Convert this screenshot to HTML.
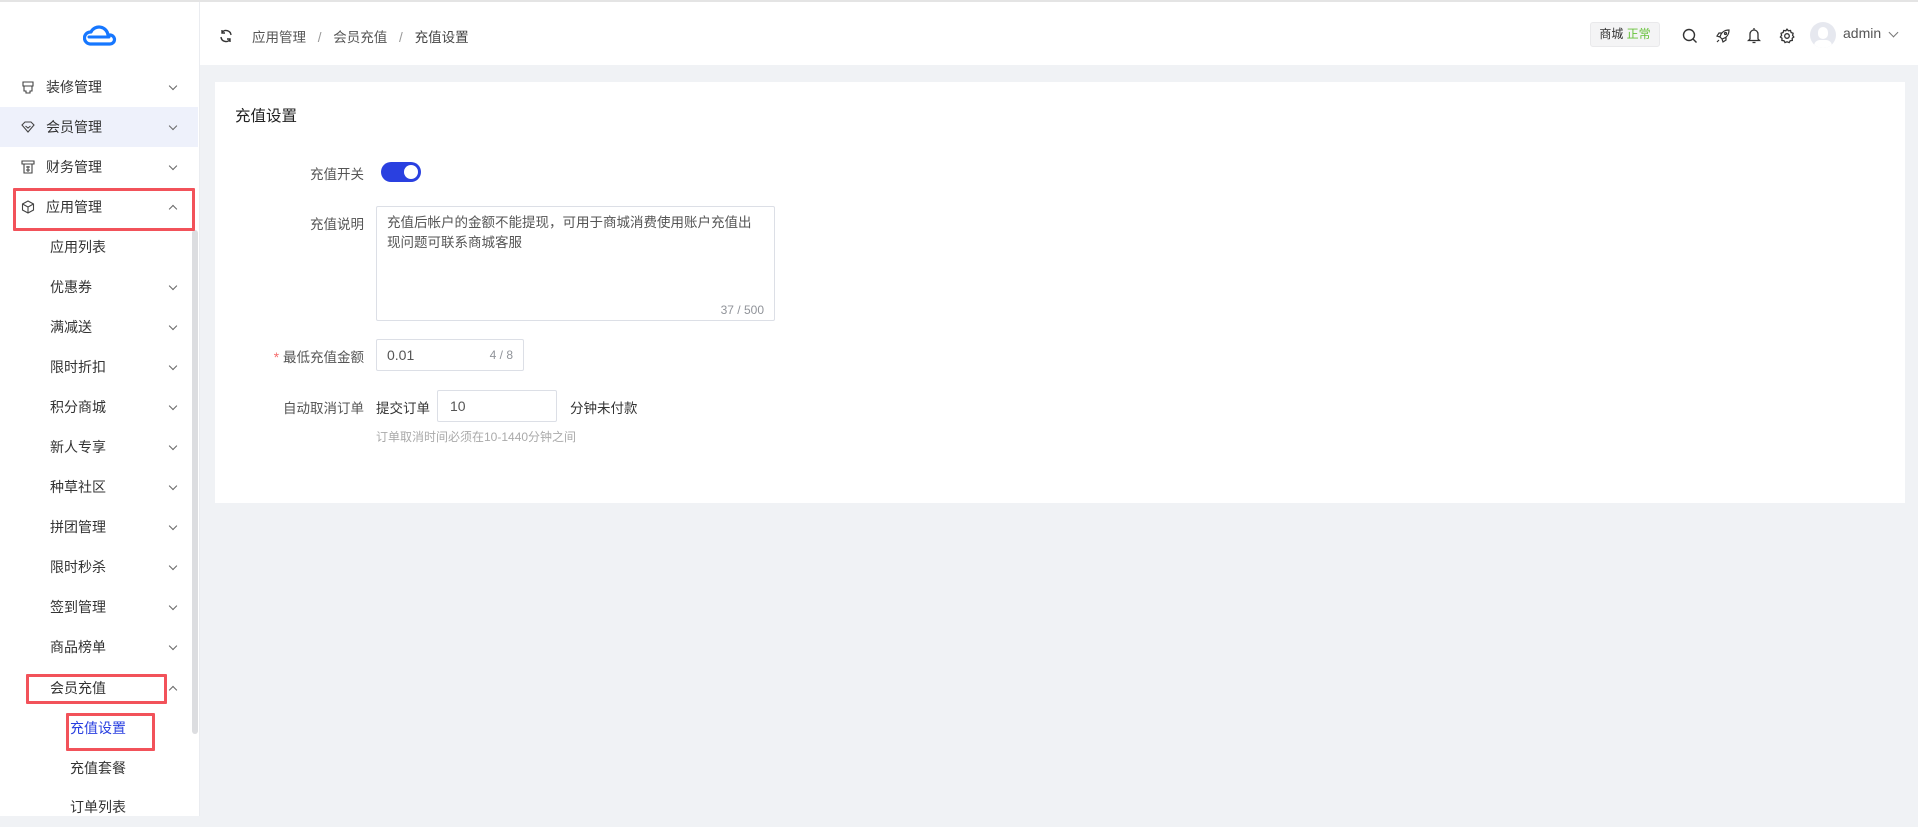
<!DOCTYPE html>
<html><head><meta charset="utf-8"><style>
*{margin:0;padding:0;box-sizing:border-box}
body{width:1918px;height:816px;overflow:hidden;background:#f0f2f5;font-family:"Liberation Sans","Noto Sans CJK SC",sans-serif;color:#333;position:relative;font-size:14px}
.abs{position:absolute}
#topline{left:0;top:0;width:1918px;height:2px;background:#e4e4e4}
#side{left:0;top:2px;width:200px;height:814px;background:#fff;border-right:1px solid #eaecf0}
#head{left:200px;top:2px;width:1718px;height:63px;background:#fff}
.mi{position:absolute;left:0;width:198px;height:40px;line-height:40px;font-size:14px;color:#333}
.chev{position:absolute;left:170px;top:16px;width:6px;height:6px;border-right:1px solid #666;border-bottom:1px solid #666;transform:rotate(45deg)}
.up{transform:rotate(-135deg);top:19px}
.red{position:absolute;border:3px solid #f2525a;border-radius:1px}
.card{left:215px;top:82px;width:1690px;height:421px;background:#fff}
.lbl{position:absolute;right:1554px;font-size:13.5px;color:#555;text-align:right;white-space:nowrap}
.box{position:absolute;border:1px solid #dcdfe6;background:#fff;border-radius:2px}
</style></head><body>
<div id="topline" class="abs"></div>
<div id="side" class="abs">
 <svg class="abs" style="left:83px;top:21px" width="34" height="24" viewBox="0 0 34 24"><path d="M7 21 L27 21 A4.5 4.5 0 0 0 27 12 L25 12 A9 9 0 0 0 8 9 A6 6 0 0 0 7 21 Z" fill="none" stroke="#1677ff" stroke-width="3.2" stroke-linejoin="round"/><path d="M6 14 L26 14" stroke="#1677ff" stroke-width="3" stroke-linecap="round"/></svg>
 <div class="mi" style="top:65px"><svg class="abs" style="left:21px;top:13px" width="14" height="14" viewBox="0 0 14 14" fill="none" stroke="#444" stroke-width="1.1"><path d="M2 2h10v4H2zM3 6v5h2v2h4v-2h2V6"/></svg><span style="position:absolute;left:46px">装修管理</span><i class="chev"></i></div>
 <div class="mi" style="top:105px;background:#eef1fb"><svg class="abs" style="left:21px;top:14px" width="14" height="12" viewBox="0 0 14 12" fill="none" stroke="#444" stroke-width="1.1"><path d="M1 4L4 1h6l3 3-6 7z M4.5 5l2.5 2 2.5-2"/></svg><span style="position:absolute;left:46px">会员管理</span><i class="chev"></i></div>
 <div class="mi" style="top:145px"><svg class="abs" style="left:21px;top:13px" width="14" height="14" viewBox="0 0 14 14" fill="none" stroke="#444" stroke-width="1.1"><path d="M1 1h12v3H1zM3 4v9h8V4M5 7h4M7 6v6M5 10h4"/></svg><span style="position:absolute;left:46px">财务管理</span><i class="chev"></i></div>
 <div class="mi" style="top:185px"><svg class="abs" style="left:21px;top:13px" width="14" height="14" viewBox="0 0 14 14" fill="none" stroke="#444" stroke-width="1.1"><path d="M7 1l5.5 3v6L7 13 1.5 10V4zM1.5 4L7 7l5.5-3M7 7v6"/></svg><span style="position:absolute;left:46px">应用管理</span><i class="chev up"></i></div>
 <div class="mi" style="top:225px"><span style="position:absolute;left:50px">应用列表</span></div>
 <div class="mi" style="top:265px"><span style="position:absolute;left:50px">优惠券</span><i class="chev"></i></div>
 <div class="mi" style="top:305px"><span style="position:absolute;left:50px">满减送</span><i class="chev"></i></div>
 <div class="mi" style="top:345px"><span style="position:absolute;left:50px">限时折扣</span><i class="chev"></i></div>
 <div class="mi" style="top:385px"><span style="position:absolute;left:50px">积分商城</span><i class="chev"></i></div>
 <div class="mi" style="top:425px"><span style="position:absolute;left:50px">新人专享</span><i class="chev"></i></div>
 <div class="mi" style="top:465px"><span style="position:absolute;left:50px">种草社区</span><i class="chev"></i></div>
 <div class="mi" style="top:505px"><span style="position:absolute;left:50px">拼团管理</span><i class="chev"></i></div>
 <div class="mi" style="top:545px"><span style="position:absolute;left:50px">限时秒杀</span><i class="chev"></i></div>
 <div class="mi" style="top:585px"><span style="position:absolute;left:50px">签到管理</span><i class="chev"></i></div>
 <div class="mi" style="top:625px"><span style="position:absolute;left:50px">商品榜单</span><i class="chev"></i></div>
 <div class="mi" style="top:666px"><span style="position:absolute;left:50px">会员充值</span><i class="chev up"></i></div>
 <div class="mi" style="top:706px;color:#2a40e0"><span style="position:absolute;left:70px">充值设置</span></div>
 <div class="mi" style="top:746px"><span style="position:absolute;left:70px">充值套餐</span></div>
 <div class="mi" style="top:785px"><span style="position:absolute;left:70px">订单列表</span></div>
 <div class="abs" style="left:192px;top:228px;width:6px;height:504px;background:#dcdde0;border-radius:3px"></div>
</div>
<div class="red" style="left:13px;top:188px;width:182px;height:43px"></div>
<div class="red" style="left:26px;top:674px;width:141px;height:30px"></div>
<div class="red" style="left:66px;top:713px;width:89px;height:38px"></div>
<div id="head" class="abs">
 <svg class="abs" style="left:19px;top:27px" width="14" height="14" viewBox="0 0 14 14" fill="none" stroke="#333" stroke-width="1.4"><path d="M12 6A5 5 0 0 0 3 3.5M2 8a5 5 0 0 0 9 2.5"/><path d="M3 1v3h3M11 13v-3H8"/></svg>
 <div class="abs" style="left:52px;top:24px;font-size:13.5px;color:#555;white-space:nowrap">应用管理 <span style="color:#999;margin:0 8px">/</span> 会员充值 <span style="color:#999;margin:0 8px">/</span> <span style="color:#444">充值设置</span></div>
 <div class="abs" style="left:1390px;top:20px;width:70px;height:25px;background:#f4f4f5;border:1px solid #e9e9eb;border-radius:3px;font-size:12px;line-height:23px;text-align:center;color:#333">商城 <span style="color:#67c23a">正常</span></div>
 <svg class="abs" style="left:1482px;top:26px" width="16" height="16" viewBox="0 0 16 16" fill="none" stroke="#333" stroke-width="1.4"><circle cx="7" cy="7" r="5.5"/><path d="M11 11l3.5 3.5"/></svg>
 <svg class="abs" style="left:1515px;top:26px" width="16" height="16" viewBox="0 0 16 16" fill="none" stroke="#333" stroke-width="1.2"><path d="M14 2C9 2 6 5 5 9l2 2c4-1 7-4 7-9zM5 9L2 8l2-3h3M7 11l1 3 3-2V9M4 12l-2 2"/><circle cx="10.5" cy="5.5" r="1"/></svg>
 <svg class="abs" style="left:1547px;top:25px" width="14" height="17" viewBox="0 0 14 17" fill="none" stroke="#333" stroke-width="1.3"><path d="M3 12V7a4 4 0 0 1 8 0v5l1.5 1.5h-11zM5.5 15.5h3M7 1v2"/></svg>
 <svg class="abs" style="left:1579px;top:26px" width="16" height="16" viewBox="0 0 16 16" fill="none" stroke="#333" stroke-width="1.3"><circle cx="8" cy="8" r="2.3"/><path d="M8 1.2l1.4 1.6 2.1-.3.6 2 2 .8-.5 2.1 1.2 1.6-1.6 1.3.1 2.1-2.1.3-1 1.9L8 13.8l-2 .8-1-1.9-2.1-.3.1-2.1L1.4 9l1.2-1.6L2.1 5.3l2-.8.6-2 2.1.3z"/></svg>
 <div class="abs" style="left:1610px;top:20px;width:26px;height:26px;border-radius:50%;background:#e6e8ef;overflow:hidden"><div style="position:absolute;left:8px;top:5px;width:10px;height:12px;border-radius:5px;background:#fff"></div><div style="position:absolute;left:4px;top:18px;width:18px;height:12px;border-radius:9px;background:#fff"></div></div>
 <div class="abs" style="left:1643px;top:23px;font-size:14px;color:#555">admin</div>
 <i class="abs" style="left:1690px;top:27px;width:7px;height:7px;border-right:1px solid #777;border-bottom:1px solid #777;transform:rotate(45deg)"></i>
</div>
<div class="card abs">
 <div class="abs" style="left:20px;top:22px;font-size:15.5px;color:#222">充值设置</div>
</div>
<div class="lbl" style="top:163px">充值开关</div>
<div class="abs" style="left:381px;top:162px;width:40px;height:20px;border-radius:10px;background:#2a40e0"><div style="position:absolute;right:3px;top:3px;width:14px;height:14px;border-radius:50%;background:#fff"></div></div>
<div class="lbl" style="top:213px">充值说明</div>
<div class="box" style="left:376px;top:206px;width:399px;height:115px"><div style="position:absolute;left:10px;top:6px;width:370px;font-size:13.5px;line-height:20px;color:#555">充值后帐户的金额不能提现，可用于商城消费使用账户充值出现问题可联系商城客服</div><div style="position:absolute;right:10px;bottom:3px;font-size:12px;color:#909399">37 / 500</div></div>
<div class="lbl" style="top:346px"><span style="color:#f56c6c;margin-right:4px">*</span>最低充值金额</div>
<div class="box" style="left:376px;top:339px;width:148px;height:32px"><div style="position:absolute;left:10px;top:7px;font-size:14px;color:#555">0.01</div><div style="position:absolute;right:10px;top:8px;font-size:12px;color:#909399">4 / 8</div></div>
<div class="lbl" style="top:397px">自动取消订单</div>
<div class="abs" style="left:376px;top:397px;font-size:13.5px;color:#333">提交订单</div>
<div class="box" style="left:437px;top:390px;width:120px;height:32px"><div style="position:absolute;left:12px;top:7px;font-size:14px;color:#555">10</div></div>
<div class="abs" style="left:570px;top:397px;font-size:13.5px;color:#333">分钟未付款</div>
<div class="abs" style="left:376px;top:428px;font-size:12px;color:#aaa">订单取消时间必须在10-1440分钟之间</div>
</body></html>
